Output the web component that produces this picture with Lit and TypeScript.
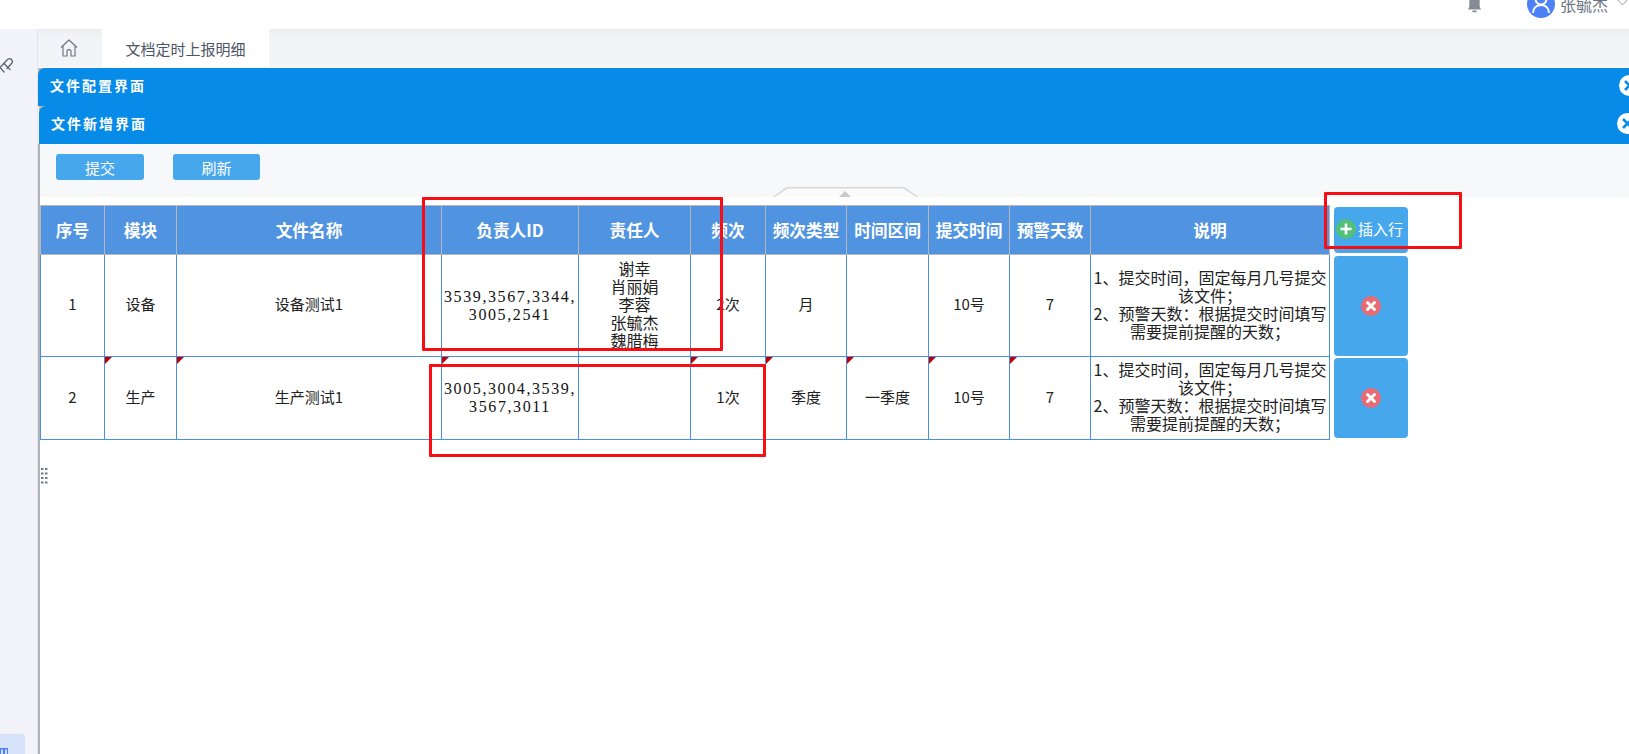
import { LitElement, html, css, svg } from "lit";
import { customElement } from "lit/decorators.js";

const COLS = [64, 72, 265, 137, 112, 75, 81, 82, 81, 81, 239];
const HEAD = ["序号", "模块", "文件名称", "负责人ID", "责任人", "频次", "频次类型", "时间区间", "提交时间", "预警天数", "说明"];

const DESC = html`1、提交时间，固定每月几号提交该文件；<br />2、预警天数：根据提交时间填写需要提前提醒的天数；`;

const closeIcon = svg`<svg class="x-ico" viewBox="0 0 20 20"><circle cx="10" cy="10" r="10" fill="#e96a72"/><path d="M6.5 6.5l7 7M13.5 6.5l-7 7" stroke="#fff" stroke-width="3" stroke-linecap="round"/></svg>`;

@customElement("app-root")
export class AppRoot extends LitElement {
  static styles = css`
    :host {
      display: block;
      position: relative;
      width: 1629px;
      height: 754px;
      overflow: hidden;
      background: #fff;
      font-family: "Noto Sans CJK SC", "Liberation Sans", sans-serif;
    }
    .top {
      height: 29px;
      background: #fff;
      display: flex;
      justify-content: flex-end;
      align-items: flex-end;
      overflow: hidden;
      box-sizing: border-box;
    }
    .bell { width: 15px; height: 24px; margin: 0 45px 16px 0; display: block; }
    .avatar { width: 28px; height: 28px; margin: 0 5px 11px 0; display: block; }
    .uname { font-size: 16px; line-height: 20px; color: #6b7482; margin: 0 9px 15px 0; width: 47px; white-space: nowrap; }
    .chev { width: 13px; height: 8px; margin: 0 0 23px 0; display: block; flex: none; }
    .body { display: flex; height: 725px; }
    .side {
      width: 37px;
      flex: none;
      background: #f2f4f9;
      border-right: 1px solid #e3e5ea;
      display: flex;
      flex-direction: column;
      overflow: hidden;
    }
    .pin { width: 14px; height: 18px; margin: 28px 0 0 -1px; display: block; }
    .side-active {
      margin-top: auto;
      width: 25px;
      height: 20px;
      background: #d6e2f8;
      border-radius: 0 3px 0 0;
      display: flex;
      align-items: flex-end;
      overflow: hidden;
    }
    .side-glyph { width: 8px; height: 6px; display: block; }
    .main { flex: 1; min-width: 0; display: flex; flex-direction: column; overflow: hidden; }
    .tabs {
      height: 38px;
      flex: none;
      display: flex;
      background: linear-gradient(#ebedf1 0, #f2f4f8 8px);
      border-bottom: 1px solid #fff;
    }
    .home { width: 64px; display: flex; align-items: center; justify-content: center; box-sizing: border-box; padding: 0 2px 1px 0; }
    .home svg { width: 18px; height: 18px; display: block; }
    .tab {
      width: 167px;
      background: #fff;
      display: flex;
      align-items: center;
      justify-content: center;
      font-size: 15px;
      color: #4b5463;
    }
    .bar {
      height: 38px;
      flex: none;
      background: #068be9;
      display: flex;
      align-items: center;
      justify-content: space-between;
      color: #fff;
      font-weight: 700;
      font-size: 14px;
      letter-spacing: 2px;
      padding: 0 0 4px 12px;
      box-sizing: border-box;
      border-top-left-radius: 7px;
    }
    .bar-wrap { background: #b4b9bd; flex: none; }
    .bar-wrap.two { margin-left: 1px; }
    .close { width: 21px; height: 21px; margin-right: -11px; display: block; flex: none; }
    .bar.second .close { margin-right: -9px; }
    .panel { flex: 1; display: flex; flex-direction: column; border-left: 2px solid #adb5ba; min-height: 0; position: relative; }
    .toolbar {
      height: 53px;
      flex: none;
      box-sizing: border-box;
      padding: 10px 0 0 16px;
      background: #f7f8fa;
      display: flex;
      gap: 29px;
      align-items: flex-start;
      position: relative;
    }
    .btn {
      width: 88px;
      height: 26px;
      background: #47a7ec;
      border-radius: 3px;
      color: #fff;
      font-size: 15px;
      display: flex;
      align-items: center;
      justify-content: center;
    }
    .btn.narrow { width: 87px; }
    .handle { position: absolute; left: 733px; bottom: 0; width: 145px; height: 10px; display: block; }
    .content { padding-top: 8px; display: flex; align-items: flex-start; }
    table { border-collapse: collapse; table-layout: fixed; width: 1289px; flex: none; }
    th {
      height: 48px;
      padding: 0;
      background: #5093e1;
      color: #fff;
      font-size: 16.7px;
      font-weight: 700;
      border: 1px solid #b5b8bb;
      white-space: nowrap;
    }
    td {
      box-sizing: border-box;
      padding: 0 0 3px;
      border: 1px solid #4a90e2;
      text-align: center;
      font-size: 15px;
      line-height: 18px;
      color: #222;
      position: relative;
      font-weight: 400;
    }
    tr.r1 td { height: 102px; }
    tr.r2 td { height: 83px; }
    td.big { font-size: 16px; padding-bottom: 4px; }
    td.mono { font-family: "Liberation Serif", serif; font-size: 16px; letter-spacing: 1.6px; padding-bottom: 0; color: #111; }
    td.mark::before {
      content: "";
      position: absolute;
      left: 0;
      top: 0;
      border-style: solid;
      border-width: 7px 7px 0 0;
      border-color: #c00000 transparent transparent transparent;
    }
    .acts { display: flex; flex-direction: column; width: 74px; margin: 2px 0 0 4px; flex: none; }
    .act { background: #47a7ec; border-radius: 4px; display: flex; align-items: center; justify-content: center; }
    .act.add { height: 46px; justify-content: flex-start; padding: 0 0 3px 2px; box-sizing: border-box; color: #fff; font-size: 15px; gap: 2px; }
    .act.del1 { height: 100px; margin-top: 3px; }
    .act.del2 { height: 80px; margin-top: 2px; }
    .plus { width: 20px; height: 20px; display: block; flex: none; }
    .x-ico { width: 20px; height: 20px; display: block; }
    .grip { width: 7px; height: 16px; display: block; margin: 28px 0 0 1px; }
    .red { position: absolute; box-sizing: border-box; border: 3px solid #f70d14; border-radius: 1px; pointer-events: none; }
    .red.a { left: 422px; top: 197px; width: 301px; height: 154px; }
    .red.b { left: 429px; top: 364px; width: 337px; height: 93px; }
    .red.c { left: 1324px; top: 192px; width: 138px; height: 57px; }
  `;

  private barClose() {
    return svg`<svg class="close" viewBox="0 0 21 21"><circle cx="10.5" cy="10.5" r="10.5" fill="#fff"/><path d="M6 6l9 9M15 6l-9 9" stroke="#068be9" stroke-width="2.6"/></svg>`;
  }

  render() {
    return html`
      <div class="top">
        <svg class="bell" viewBox="0 0 16 24"><path d="M8 0c-4 0-5.500 3.500-5.500 8v10L1 21h14l-1.500-3V8C13.500 3.500 12 0 8 0z" fill="#858b95"/><rect x="5.500" y="22" width="5" height="2" rx="1" fill="#858b95"/></svg>
        <svg class="avatar" viewBox="0 0 28 28"><circle cx="14" cy="14" r="14" fill="#4e80f8"/><circle cx="14" cy="9" r="5.500" fill="none" stroke="#fff" stroke-width="2"/><path d="M6 23c0-5 3.500-8 8-8s8 3 8 8" fill="none" stroke="#fff" stroke-width="2"/></svg>
        <div class="uname">张毓杰</div>
        <svg class="chev" viewBox="0 0 13 8"><path d="M.500.500L6.500 7 12.500.500" fill="none" stroke="#9aa0a8" stroke-width="1"/></svg>
      </div>
      <div class="body">
        <div class="side">
          <svg class="pin" viewBox="0 0 14 18"><path d="M8.500 2.500L1 10.500M12.500 6.500L8 11.500M8.500 2.500c1.300-1.300 3-1.300 4 0s1.200 2.800 0 4M5 6.500l6 6M1 10.500l4 4.500" fill="none" stroke="#5d6573" stroke-width="1.300" stroke-linecap="round"/></svg>
          <div class="side-active">
            <svg class="side-glyph" viewBox="0 0 8 6"><rect width="8" height="6" fill="#4e80f8"/><rect x="1" y="1.500" width="2" height="4.500" fill="#cfdcfa"/><rect x="5" y="1.500" width="2" height="4.500" fill="#cfdcfa"/></svg>
          </div>
        </div>
        <div class="main">
          <div class="tabs">
            <div class="home"><svg viewBox="0 0 18 18"><path d="M1 8.500L9 1l8 7.500M3 7v10h4v-4.500c0-2.500 4-2.500 4 0V17h4V7" fill="none" stroke="#6f7785" stroke-width="1.200" stroke-linejoin="round"/></svg></div>
            <div class="tab">文档定时上报明细</div>
          </div>
          <div class="bar-wrap"><div class="bar"><span>文件配置界面</span>${this.barClose()}</div></div>
          <div class="bar-wrap two"><div class="bar second"><span>文件新增界面</span>${this.barClose()}</div></div>
          <div class="panel">
            <div class="toolbar">
              <div class="btn">提交</div>
              <div class="btn narrow">刷新</div>
              <svg class="handle" viewBox="0 0 145 10"><path d="M.500 10L14 .800h117L144.500 10" fill="#fbfbfc" stroke="#d8d8d8" stroke-width="1.500"/><path d="M66 10l6-6 6 6z" fill="#c6c8cb"/></svg>
            </div>
            <div class="content">
              <table>
                <colgroup>${COLS.map((w) => html`<col style="width:${w}px" />`)}</colgroup>
                <thead><tr>${HEAD.map((h) => html`<th>${h}</th>`)}</tr></thead>
                <tbody>
                  <tr class="r1">
                    <td>1</td><td>设备</td><td>设备测试1</td>
                    <td class="mono">3539,3567,3344,<br />3005,2541</td>
                    <td class="big">谢幸<br />肖丽娟<br />李蓉<br />张毓杰<br />魏腊梅</td>
                    <td>2次</td><td>月</td><td></td><td>10号</td><td>7</td>
                    <td class="big">${DESC}</td>
                  </tr>
                  <tr class="r2">
                    <td>2</td><td class="mark">生产</td><td class="mark">生产测试1</td>
                    <td class="mono mark">3005,3004,3539,<br />3567,3011</td>
                    <td></td>
                    <td class="mark">1次</td><td class="mark">季度</td><td class="mark">一季度</td><td class="mark">10号</td><td class="mark">7</td>
                    <td class="big">${DESC}</td>
                  </tr>
                </tbody>
              </table>
              <div class="acts">
                <div class="act add">
                  <svg class="plus" viewBox="0 0 20 20"><circle cx="10" cy="10" r="10" fill="#52c07a"/><path d="M10 4.500v11M4.500 10h11" stroke="#fff" stroke-width="2.600"/></svg>
                  <span>插入行</span>
                </div>
                <div class="act del1">${closeIcon}</div>
                <div class="act del2">${closeIcon}</div>
              </div>
            </div>
            <svg class="grip" viewBox="0 0 7 16"><g fill="#6f7a8a"><rect x="0" y="0" width="2.500" height="2"/><rect x="4" y="0" width="2.500" height="2"/><rect x="0" y="4.500" width="2.500" height="2"/><rect x="4" y="4.500" width="2.500" height="2"/><rect x="0" y="9" width="2.500" height="2"/><rect x="4" y="9" width="2.500" height="2"/><rect x="0" y="13.500" width="2.500" height="2"/><rect x="4" y="13.500" width="2.500" height="2"/></g></svg>
          </div>
        </div>
      </div>
      <div class="red a"></div>
      <div class="red b"></div>
      <div class="red c"></div>
    `;
  }
}
